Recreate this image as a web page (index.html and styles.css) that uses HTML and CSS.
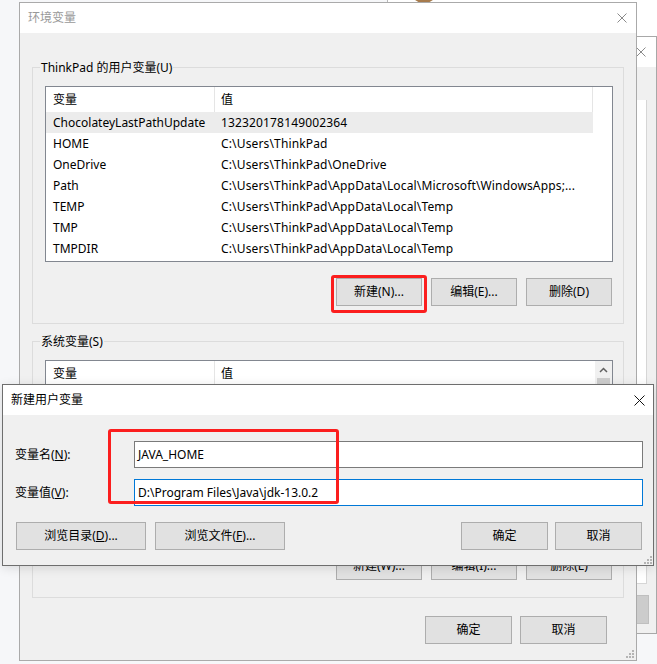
FILE: index.html
```html
<!DOCTYPE html>
<html lang="zh-CN">
<head>
<meta charset="utf-8">
<title>环境变量</title>
<link rel="stylesheet" href="styles.css">
</head>
<body>
<div class="desktop">
  <div class="topwin"><div class="topicon"></div></div>

  <div class="backwin">
    <div class="titlebar back-title">
      <svg class="xicon" width="10" height="10" viewBox="0 0 10 10"><path d="M0.5 0.5L9.5 9.5M9.5 0.5L0.5 9.5" stroke="#8a8a8a" stroke-width="1" fill="none"/></svg>
    </div>
    <div class="back-body">
      <div class="back-list"></div>
      <div class="back-btn"></div>
    </div>
  </div>

  <div class="mainwin">
    <div class="titlebar main-title">
      <span class="title inactive">环境变量</span>
      <svg class="xicon" width="10" height="10" viewBox="0 0 10 10"><path d="M0.5 0.5L9.5 9.5M9.5 0.5L0.5 9.5" stroke="#8a8a8a" stroke-width="1" fill="none"/></svg>
    </div>
    <div class="main-body">
      <div class="group">
        <div class="legend">ThinkPad 的用户变量(U)</div>
        <div class="list">
          <div class="lhead"><div class="c1">变量</div><div class="c2">值</div></div>
          <div class="row sel"><div class="c1">ChocolateyLastPathUpdate</div><div class="c2">132320178149002364</div></div>
          <div class="row"><div class="c1">HOME</div><div class="c2">C:\Users\ThinkPad</div></div>
          <div class="row"><div class="c1">OneDrive</div><div class="c2">C:\Users\ThinkPad\OneDrive</div></div>
          <div class="row"><div class="c1">Path</div><div class="c2">C:\Users\ThinkPad\AppData\Local\Microsoft\WindowsApps;...</div></div>
          <div class="row"><div class="c1">TEMP</div><div class="c2">C:\Users\ThinkPad\AppData\Local\Temp</div></div>
          <div class="row"><div class="c1">TMP</div><div class="c2">C:\Users\ThinkPad\AppData\Local\Temp</div></div>
          <div class="row"><div class="c1">TMPDIR</div><div class="c2">C:\Users\ThinkPad\AppData\Local\Temp</div></div>
        </div>
        <div class="btnrow">
          <button class="btn">新建(N)...</button>
          <button class="btn">编辑(E)...</button>
          <button class="btn">删除(D)</button>
        </div>
      </div>

      <div class="group group2">
        <div class="legend">系统变量(S)</div>
        <div class="list list2">
          <div class="list-main">
            <div class="lhead"><div class="c1">变量</div><div class="c2 c2s">值</div></div>
          </div>
          <div class="scrollbar">
            <div class="sb-up"><svg width="9" height="6" viewBox="0 0 9 6"><path d="M1 5L4.5 1.5L8 5" stroke="#606060" stroke-width="1.5" fill="none"/></svg></div>
            <div class="sb-thumb"></div>
          </div>
        </div>
        <div class="btnrow">
          <button class="btn">新建(W)...</button>
          <button class="btn">编辑(I)...</button>
          <button class="btn">删除(L)</button>
        </div>
      </div>

      <div class="footer">
        <button class="btn btn87">确定</button>
        <button class="btn btn87">取消</button>
      </div>
    </div>
    <svg class="grip main-grip" width="8" height="8" viewBox="0 0 8 8"><path d="M6 0h2v2h-2zM3 3h2v2h-2zM6 3h2v2h-2zM0 6h2v2h-2zM3 6h2v2h-2zM6 6h2v2h-2z" fill="#b4b4b4"/></svg>
  </div>

  <div class="dialog">
    <div class="titlebar dlg-title">
      <span class="title">新建用户变量</span>
      <svg class="xicon" width="11" height="11" viewBox="0 0 11 11"><path d="M0.5 0.5L10.5 10.5M10.5 0.5L0.5 10.5" stroke="#111" stroke-width="1" fill="none"/></svg>
    </div>
    <div class="dlg-body">
      <div class="field">
        <label class="flabel">变量名(<u>N</u>):</label>
        <div class="input">JAVA_HOME</div>
      </div>
      <div class="field field2">
        <label class="flabel">变量值(<u>V</u>):</label>
        <div class="input focus">D:\Program Files\Java\jdk-13.0.2</div>
      </div>
      <div class="dlg-btns">
        <div class="bgroup">
          <button class="btn btn130">浏览目录(<u>D</u>)...</button>
          <button class="btn btn130">浏览文件(<u>F</u>)...</button>
        </div>
        <div class="bgroup bgroup-r">
          <button class="btn btn87">确定</button>
          <button class="btn btn87">取消</button>
        </div>
      </div>
    </div>
    <svg class="grip dlg-grip" width="8" height="8" viewBox="0 0 8 8"><path d="M6 0h2v2h-2zM3 3h2v2h-2zM6 3h2v2h-2zM0 6h2v2h-2zM3 6h2v2h-2zM6 6h2v2h-2z" fill="#b4b4b4"/></svg>
  </div>

  <div class="mark mark1"></div>
  <div class="mark mark2"></div>
</div>
</body>
</html>
```

FILE: styles.css
```css
* { box-sizing: border-box; }
html, body { margin: 0; padding: 0; }
body {
  background: #f6f7f9;
  font-family: "Noto Sans", "Noto Sans CJK SC", sans-serif;
  font-size: 12px;
  color: #000;
}
.desktop {
  position: relative;
  width: 657px;
  height: 664px;
  overflow: hidden;
}

/* generic */
.titlebar {
  height: 30px;
  background: #fff;
  display: flex;
  align-items: center;
  justify-content: space-between;
}
.title { line-height: 18px; white-space: nowrap; }
.title.inactive { color: #999; }
.xicon { display: block; flex: none; }
.btn {
  font: inherit;
  color: #000;
  background: #e1e1e1;
  border: 1px solid #adadad;
  height: 28px;
  width: 86px;
  padding: 0;
  margin: 0;
  line-height: 26px;
  white-space: nowrap;
}
.btn87 { width: 87px; }
.btn130 { width: 130px; }
.grip { position: absolute; display: block; }

/* top background window */
.topwin {
  position: absolute;
  left: 387px;
  top: -10px;
  width: 300px;
  height: 80px;
  background: #fff;
  border-left: 1px solid #b8b8b8;
}
.topicon {
  margin: 0 0 0 23px;
  width: 26px;
  height: 13px;
  border-radius: 0 0 12px 12px;
  background: #a77b4c;
}

/* back window at right */
.backwin {
  position: absolute;
  left: 400px;
  top: 36px;
  width: 257px;
  height: 598px;
  border: 1px solid #a8a8a8;
  background: #f0f0f0;
}
.back-title { justify-content: flex-end; padding-right: 10px; }
.back-body {
  display: flex;
  flex-direction: column;
  align-items: flex-end;
  padding: 33px 0 0 0;
}
.back-list {
  width: 200px;
  height: 484px;
  margin-right: 9px;
  background: #fff;
  border-right: 1px solid #d6d6d6;
  border-bottom: 1px solid #d6d6d6;
}
.back-btn {
  margin-top: 11px;
  margin-right: 7px;
  width: 80px;
  height: 29px;
  background: #cccccc;
  border: 1px solid #bfbfbf;
}

/* main window */
.mainwin {
  position: absolute;
  left: 19px;
  top: 2px;
  width: 618px;
  height: 659px;
  border: 1px solid #aaaaaa;
  background: #f0f0f0;
}
.main-title { padding: 0 9px 0 8px; }
.main-body { padding: 34px 12px 0 12px; }
.group {
  position: relative;
  border: 1px solid #dcdcdc;
  padding: 18px 10px 17px 12px;
}
.group2 { margin-top: 17px; }
.legend {
  position: absolute;
  top: -9px;
  left: 7px;
  padding: 0 1px;
  background: #f0f0f0;
  line-height: 18px;
  white-space: nowrap;
}
.list {
  height: 176px;
  border: 1px solid #828790;
  background: #fff;
  overflow: hidden;
}
.lhead {
  display: flex;
  height: 25px;
  align-items: center;
}
.lhead .c1 {
  width: 169px;
  height: 25px;
  line-height: 25px;
  padding-left: 7px;
  border-right: 1px solid #e5e5e5;
}
.lhead .c2 {
  width: 378px;
  height: 25px;
  line-height: 25px;
  padding-left: 6px;
  border-right: 1px solid #e5e5e5;
}
.lhead .c2s { flex: 1; border-right: none; }
.row {
  display: flex;
  width: 547px;
  height: 21px;
  line-height: 21px;
  white-space: nowrap;
}
.row.sel { background: #ececec; }
.row .c1 { width: 168px; padding-left: 7px; }
.row .c2 { flex: 1; padding-left: 7px; overflow: hidden; letter-spacing: 0.15px; }
.btnrow {
  display: flex;
  justify-content: flex-end;
  gap: 9px;
  margin-top: 16px;
  padding-right: 1px;
}
.list2 { display: flex; }
.list-main { flex: 1; min-width: 0; }
.scrollbar {
  width: 17px;
  background: #f0f0f0;
  display: flex;
  flex-direction: column;
  align-items: center;
}
.sb-up {
  height: 17px;
  width: 17px;
  display: flex;
  align-items: center;
  justify-content: center;
}
.sb-thumb {
  width: 13px;
  height: 60px;
  background: #cdcdcd;
}
.footer {
  display: flex;
  justify-content: flex-end;
  gap: 8px;
  margin-top: 18px;
  padding-right: 17px;
}
.main-grip { right: 2px; bottom: 2px; }

/* dialog */
.dialog {
  position: absolute;
  left: 2px;
  top: 384px;
  width: 652px;
  height: 182px;
  border: 1px solid #6e6e6e;
  background: #f0f0f0;
  box-shadow: 0 2px 10px rgba(0,0,0,0.12);
}
.dlg-title { padding: 0 8px 0 8px; }
.dlg-body { padding: 26px 10px 15px 12px; }
.field {
  display: flex;
  align-items: center;
  height: 27px;
}
.field2 { margin-top: 11px; }
.flabel { width: 119px; flex: none; line-height: 18px; }
.input {
  flex: 1;
  height: 27px;
  line-height: 25px;
  border: 1px solid #7a7a7a;
  background: #fff;
  padding-left: 3px;
  white-space: nowrap;
}
.input.focus { border-color: #0078d7; }
.dlg-btns {
  display: flex;
  justify-content: space-between;
  margin: 16px 1px 0 1px;
}
.bgroup { display: flex; gap: 9px; }
.bgroup-r { gap: 7px; }
.dlg-grip { right: 1px; bottom: 1px; }

/* red annotation boxes */
.mark {
  position: absolute;
  border: 3px solid #fb1e1e;
  border-radius: 3px;
}
.mark1 { left: 331px; top: 275px; width: 96px; height: 38px; }
.mark2 { left: 108px; top: 429px; width: 231px; height: 75px; }
```
